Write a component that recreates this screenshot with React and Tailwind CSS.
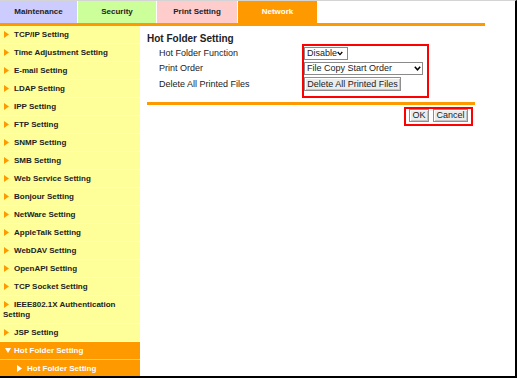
const menu = [
  "TCP/IP Setting",
  "Time Adjustment Setting",
  "E-mail Setting",
  "LDAP Setting",
  "IPP Setting",
  "FTP Setting",
  "SNMP Setting",
  "SMB Setting",
  "Web Service Setting",
  "Bonjour Setting",
  "NetWare Setting",
  "AppleTalk Setting",
  "WebDAV Setting",
  "OpenAPI Setting",
  "TCP Socket Setting",
  "IEEE802.1X Authentication Setting",
  "JSP Setting",
];

function Arrow({ color = "#ff9900" }) {
  return (
    <svg width="5" height="7" viewBox="0 0 5 7" className="mr-[5px] ml-px inline-block align-[-1px]">
      <path d="M0 0L5 3.5L0 7Z" fill={color} />
    </svg>
  );
}

function Chevron() {
  return (
    <svg width="7" height="5" viewBox="0 0 7 5">
      <path d="M0.8 0.8L3.5 3.8L6.2 0.8" fill="none" stroke="#000" strokeWidth="1.5" />
    </svg>
  );
}

function Select({ value, className }) {
  return (
    <div className={`flex h-[13px] items-center justify-between border border-[#8a8a8a] bg-white pl-[2px] text-[9px] leading-none ${className}`}>
      <span>{value}</span>
      <Chevron />
    </div>
  );
}

function Btn({ children, className = "" }) {
  return (
    <div className={`flex h-[13px] items-center justify-center border border-[#8f8f8f] bg-[#ececec] text-[9px] leading-none shadow-[inset_1px_1px_0_#fff,inset_-1px_-1px_0_#c4c4c4] ${className}`}>
      {children}
    </div>
  );
}

export default function App() {
  return (
    <div className="h-[378px] w-[517px] overflow-hidden border-t border-r-2 border-b-2 border-t-[#d4d4d4] border-r-black border-b-black bg-white font-['Liberation_Sans',Arial,sans-serif] text-[#222]">
      <div className="flex h-[22px] gap-px text-[8px] font-bold">
        <div className="flex w-[77px] items-center justify-center bg-[#ccccff]">Maintenance</div>
        <div className="flex w-[78px] items-center justify-center bg-[#ccff99]">Security</div>
        <div className="flex w-[80px] items-center justify-center bg-[#ffcccc]">Print Setting</div>
        <div className="flex w-[79px] items-center justify-center bg-[#ff9900] text-white">Network</div>
      </div>
      <div className="h-[3px] w-[485px] bg-[#ff9900]" />

      <div className="flex">
        <nav className="w-[140px] bg-[#ffff99] text-[8px] font-bold">
          {menu.map((m) => (
            <div key={m} className="border-b border-[#fffde0] pt-[4px] pb-[3px] pl-[3px] pr-[3px] leading-[10px]">
              <Arrow />
              {m}
            </div>
          ))}
          <div className="border-b border-[#ffc680] bg-[#ff9900] pt-[4px] pb-[3px] pl-[5px] leading-[10px] text-white">
            <svg width="6" height="5" viewBox="0 0 6 5" className="mr-[3px] inline-block align-[0px]">
              <path d="M0 0L6 0L3 5Z" fill="#fff" />
            </svg>
            Hot Folder Setting
          </div>
          <div className="bg-[#ff9900] pt-[4px] pb-[3px] pl-[16px] leading-[10px] text-white">
            <Arrow color="#fff" />
            Hot Folder Setting
          </div>
        </nav>

        <main className="ml-[7px] w-[328px]">
          <h1 className="mt-[7px] text-[10px] font-bold leading-[11px]">Hot Folder Setting</h1>
          <div className="flex">
            <div className="ml-[12px] flex w-[143px] flex-col gap-[2px] pt-[3px] text-[9px] leading-none">
              <div className="flex h-[13px] items-center">Hot Folder Function</div>
              <div className="flex h-[13px] items-center">Print Order</div>
              <div className="flex h-[14px] items-center">Delete All Printed Files</div>
            </div>
            <div className="flex h-[54px] w-[127px] flex-col gap-[2px] border-2 border-[#f00] pt-px pl-0">
              <Select value="Disable" className="w-[44px] pr-[4px]" />
              <Select value="File Copy Start Order" className="w-[119px] pr-[1px]" />
              <Btn className="h-[14px] w-[97px]">Delete All Printed Files</Btn>
            </div>
          </div>
          <div className="mt-[4px] h-[3px] bg-[#ff9900]" />
          <div className="mt-[2px] flex justify-end pr-[2px]">
            <div className="flex h-[19px] w-[69px] gap-[4px] border-2 border-[#f00] pl-[3px]">
              <Btn className="w-[20px]">OK</Btn>
              <Btn className="w-[35px]">Cancel</Btn>
            </div>
          </div>
        </main>
      </div>
    </div>
  );
}
